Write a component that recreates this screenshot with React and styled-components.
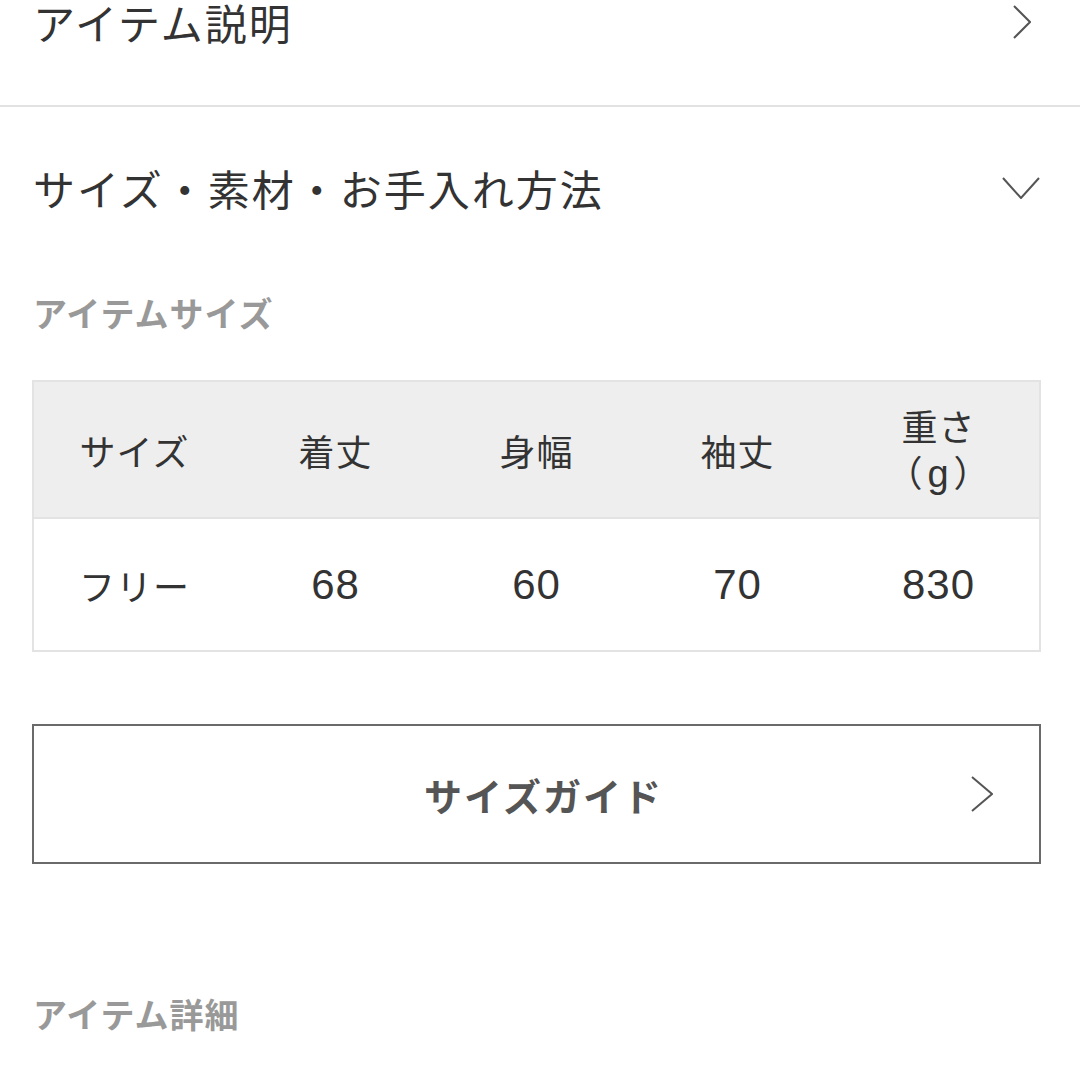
import React from 'react';
import styled, { createGlobalStyle } from 'styled-components';

const GlobalStyle = createGlobalStyle`
  html, body {
    margin: 0;
    padding: 0;
    background: #fff;
    font-family: "Noto Sans CJK JP", "Noto Sans", sans-serif;
    color: #333;
  }
`;

const Page = styled.div`
  width: 1080px;
  height: 1080px;
  overflow: hidden;
  display: flex;
  flex-direction: column;
`;

const AccordionRow = styled.div`
  display: flex;
  align-items: center;
  justify-content: space-between;
  padding: ${props => props.padding || '0'};
  padding-left: 33px;
  padding-right: ${props => props.right || '40px'};
`;

const AccordionTitle = styled.div`
  font-size: 42px;
  line-height: 44px;
  letter-spacing: 2px;
  color: #333;
`;

const Divider = styled.div`
  height: 2px;
  background: #e2e2e2;
`;

const Section = styled.div`
  padding: 0 39px 0 32px;
  display: flex;
  flex-direction: column;
`;

const SubHeading = styled.div`
  font-size: 34px;
  line-height: 40px;
  font-weight: 700;
  letter-spacing: 1px;
  color: #999;
  margin-top: ${props => props.top || '0'};
  padding-left: 1px;
`;

const Table = styled.div`
  margin-top: 47px;
  border: 2px solid #e3e3e3;
  display: grid;
  grid-template-columns: repeat(5, 1fr);
`;

const HeadCell = styled.div`
  background: #eeeeee;
  height: 135px;
  display: flex;
  flex-direction: column;
  align-items: center;
  justify-content: center;
  text-align: center;
  font-size: 36px;
  line-height: 46px;
  letter-spacing: 1px;
  color: #333;
  border-bottom: 2px solid #e3e3e3;
`;

const Unit = styled.span`
  font-family: "Liberation Sans", Arial, sans-serif;
  font-size: 38px;
  padding: 0 4px;
`;

const BodyCell = styled.div`
  height: 131px;
  display: flex;
  align-items: center;
  justify-content: center;
  font-family: ${props => (props.numeric ? '"Liberation Sans", Arial, sans-serif' : 'inherit')};
  font-size: ${props => (props.numeric ? '42px' : '36px')};
  letter-spacing: 1px;
  color: #333;
`;

const GuideButton = styled.div`
  margin-top: 72px;
  height: 136px;
  border: 2px solid #6a6a6a;
  display: grid;
  grid-template-columns: 1fr auto 1fr;
  align-items: center;
`;

const GuideLabel = styled.div`
  grid-column: 2;
  font-size: 38px;
  font-weight: 700;
  letter-spacing: 2px;
  color: #555;
  padding-left: 14px;
`;

const GuideIcon = styled.div`
  grid-column: 3;
  justify-self: end;
  margin-right: 46px;
  display: flex;
`;

const ChevronRight = ({ w = 18, h = 34, color = '#555' }) => (
  <svg width={w} height={h} viewBox={`0 0 ${w} ${h}`} fill="none">
    <polyline points={`1,1 ${w - 1},${h / 2} 1,${h - 1}`} stroke={color} strokeWidth="2" />
  </svg>
);

const ChevronDown = ({ w = 38, h = 22, color = '#555' }) => (
  <svg width={w} height={h} viewBox={`0 0 ${w} ${h}`} fill="none">
    <polyline points={`1,1 ${w / 2},${h - 1} ${w - 1},1`} stroke={color} strokeWidth="2" />
  </svg>
);

const headers = ['サイズ', '着丈', '身幅', '袖丈'];
const values = ['フリー', '68', '60', '70', '830'];

export default function App() {
  return (
    <Page>
      <GlobalStyle />
      <AccordionRow padding="0 0 61px" right="49px">
        <AccordionTitle>アイテム説明</AccordionTitle>
        <ChevronRight />
      </AccordionRow>
      <Divider />
      <AccordionRow padding="59px 0" right="40px">
        <AccordionTitle>サイズ・素材・お手入れ方法</AccordionTitle>
        <ChevronDown />
      </AccordionRow>
      <Section>
        <SubHeading top="24px">アイテムサイズ</SubHeading>
        <Table>
          {headers.map((h) => (
            <HeadCell key={h}>{h}</HeadCell>
          ))}
          <HeadCell>
            <div>重さ</div>
            <div>（<Unit>g</Unit>）</div>
          </HeadCell>
          {values.map((v, i) => (
            <BodyCell key={'v' + i} numeric={i > 0}>
              {v}
            </BodyCell>
          ))}
        </Table>
        <GuideButton>
          <GuideLabel>サイズガイド</GuideLabel>
          <GuideIcon>
            <ChevronRight w={22} h={36} />
          </GuideIcon>
        </GuideButton>
        <SubHeading top="130px">アイテム詳細</SubHeading>
      </Section>
    </Page>
  );
}
